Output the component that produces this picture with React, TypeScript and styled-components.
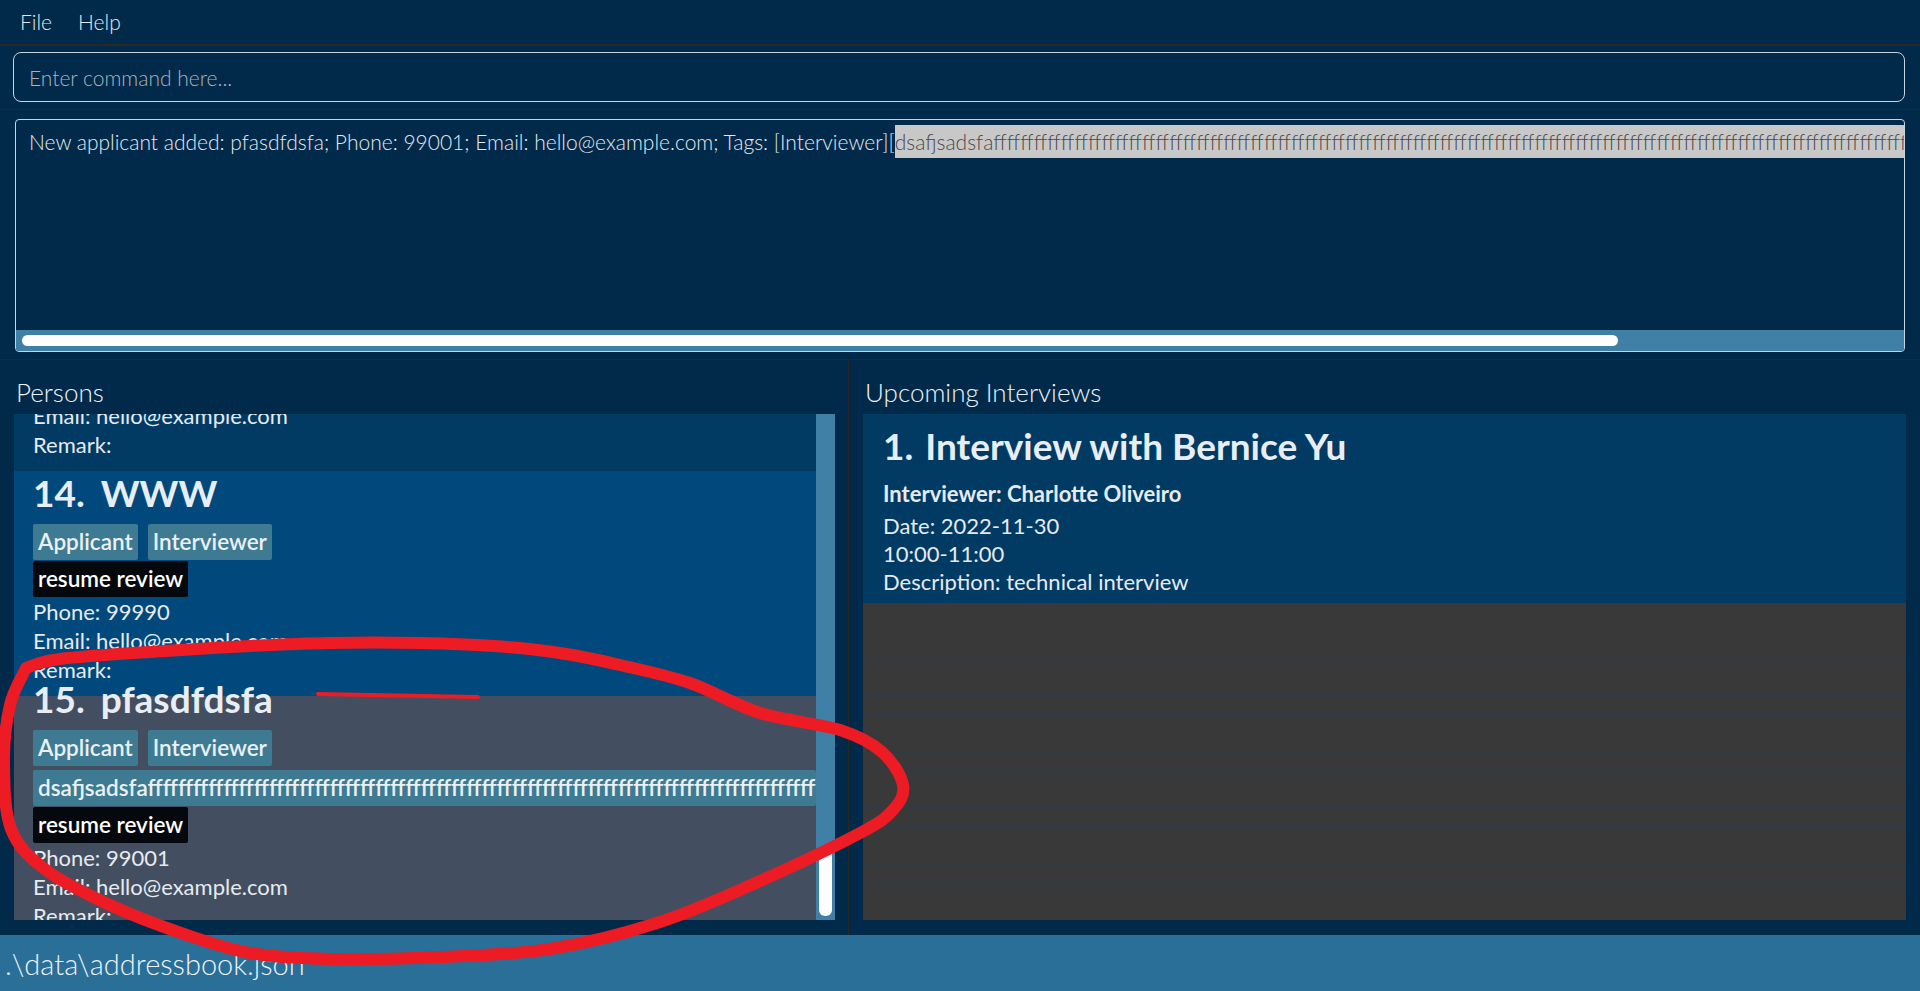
import React from 'react';
import styled, { createGlobalStyle } from 'styled-components';

const GlobalStyle = createGlobalStyle`
  html, body {
    margin: 0;
    padding: 0;
  }
  body {
    background: #012a4a;
    font-family: Lato, "Noto Sans", sans-serif;
    overflow: hidden;
  }
`;

const Window = styled.div`
  position: relative;
  width: 1920px;
  height: 991px;
  display: flex;
  flex-direction: column;
  background: #012a4a;
  color: #e6ebf0;
  overflow: hidden;
`;

const MenuBar = styled.div`
  height: 44px;
  display: flex;
  align-items: center;
  gap: 26px;
  padding-left: 20px;
  font-size: 21px;
  font-weight: 300;
  color: #e4e8ec;
  border-bottom: 2px solid #2a2826;
`;

const MenuItem = styled.span`
  line-height: 24px;
`;

const CommandPane = styled.div`
  padding: 6px 15px 7px 13px;
  border-bottom: 1px solid #2a2826;
`;

const CommandBox = styled.div`
  height: 48px;
  display: flex;
  align-items: center;
  padding-left: 15px;
  border: 1px solid #c9d3dc;
  border-radius: 8px;
  font-size: 21px;
  font-weight: 300;
  color: #a8b3bd;
`;

const ResultPane = styled.div`
  padding: 9px 15px 7px 15px;
  border-bottom: 1px solid #2a2826;
`;

const ResultBox = styled.div`
  height: 231px;
  display: flex;
  flex-direction: column;
  border: 1px solid #c9d3dc;
  border-radius: 4px;
  overflow: hidden;
`;

const ResultText = styled.div`
  flex: 1;
  padding: 5px 0 0 13px;
  font-size: 21px;
  font-weight: 300;
  line-height: 33px;
  white-space: nowrap;
  overflow: hidden;
  color: #e3e9ef;
`;

const Highlight = styled.span`
  display: inline-block;
  background: #c8c8c8;
  color: #4a4a4a;
`;

const HTrack = styled.div`
  height: 21px;
  padding: 5px 6px;
  box-sizing: border-box;
  background: #4080a6;
`;

const HThumb = styled.div`
  width: 1596px;
  height: 11px;
  border-radius: 6px;
  background: #ffffff;
`;

const Main = styled.div`
  flex: 1;
  display: flex;
`;

const Panel = styled.div<{ $width?: number }>`
  ${(p) => (p.$width ? `width: ${p.$width}px;` : 'flex: 1;')}
  display: flex;
  flex-direction: column;
  padding: 0 ${(p) => (p.$width ? 13 : 14)}px 15px 14px;
  border-right: ${(p) => (p.$width ? '1px solid #2a2826' : '0')};
  box-sizing: border-box;
`;

const PanelTitle = styled.div`
  height: 54px;
  padding: 17px 0 0 2px;
  box-sizing: border-box;
  font-size: 26px;
  font-weight: 300;
  line-height: 31px;
  color: #eef3f7;
`;

const ListFrame = styled.div`
  height: 506px;
  display: flex;
`;

const CardsViewport = styled.div`
  flex: 1;
  min-width: 0;
  overflow: hidden;
  background: #393939;
`;

const VTrack = styled.div`
  width: 19px;
  display: flex;
  flex-direction: column;
  justify-content: flex-end;
  padding: 0 3px 4px;
  box-sizing: border-box;
  background: #4080a6;
`;

const VThumb = styled.div`
  height: 68px;
  border-radius: 6px;
  background: #ffffff;
`;

const Card = styled.div<{ $bg: string }>`
  display: flow-root;
  background: ${(p) => p.$bg};
  padding: 0 0 12px 19px;
`;

const NameRow = styled.div<{ $shift?: number }>`
  display: flex;
  gap: 16px;
  margin-top: ${(p) => p.$shift ?? 0}px;
  font-size: 37px;
  font-weight: 700;
  line-height: 44px;
  color: #e8eef5;
  white-space: nowrap;
`;

const TagRow = styled.div`
  display: flex;
  flex-wrap: wrap;
  gap: 4px 10px;
  margin-top: 9px;
`;

const Tag = styled.span<{ $dark?: boolean }>`
  display: inline-block;
  max-width: 100%;
  box-sizing: border-box;
  padding: 0 5px;
  border-radius: 2px;
  background: ${(p) => (p.$dark ? '#05090d' : '#3e7b92')};
  color: ${(p) => (p.$dark ? '#ffffff' : '#eaf0f4')};
  font-size: 22.5px;
  font-weight: 600;
  line-height: 36px;
  white-space: nowrap;
  overflow: hidden;
`;

const NoteRow = styled.div`
  margin-top: 1px;
  display: flex;
`;

const Detail = styled.div<{ $bold?: boolean; $shift?: number; $lh?: number }>`
  margin-top: ${(p) => p.$shift ?? 0}px;
  font-size: 22px;
  font-weight: ${(p) => (p.$bold ? 700 : 400)};
  line-height: ${(p) => p.$lh ?? 29}px;
  color: #e6ebf0;
  white-space: nowrap;
`;

const InterviewList = styled.div`
  height: 506px;
  display: flex;
  flex-direction: column;
  overflow: hidden;
`;

const InterviewCard = styled.div`
  background: #013a63;
  padding: 10px 0 7px 20px;
`;

const InterviewTitle = styled.div`
  display: flex;
  gap: 12px;
  font-size: 37px;
  font-weight: 700;
  line-height: 44px;
  color: #e8eef5;
  margin-bottom: 12px;
`;

const EmptyRows = styled.div`
  flex: 1;
  background: repeating-linear-gradient(
    to bottom,
    #393939 0,
    #393939 17.7px,
    #2f3a44 17.7px,
    #2f3a44 18.7px
  );
`;

const StatusBar = styled.div`
  height: 56px;
  display: flex;
  align-items: center;
  padding-left: 5px;
  background: #2a6f97;
  font-size: 29px;
  font-weight: 300;
  color: #eef2f6;
`;

const Ink = styled.svg`
  position: absolute;
  left: 0;
  top: 0;
  pointer-events: none;
`;

type Pt = [number, number];

const smooth = (pts: Pt[]) => {
  let d = `M ${pts[0][0]} ${pts[0][1]}`;
  for (let i = 0; i < pts.length - 1; i++) {
    const p0 = pts[i - 1] || pts[i];
    const p1 = pts[i];
    const p2 = pts[i + 1];
    const p3 = pts[i + 2] || p2;
    const c1: Pt = [p1[0] + (p2[0] - p0[0]) / 6, p1[1] + (p2[1] - p0[1]) / 6];
    const c2: Pt = [p2[0] - (p3[0] - p1[0]) / 6, p2[1] - (p3[1] - p1[1]) / 6];
    d += ` C ${c1[0]} ${c1[1]} ${c2[0]} ${c2[1]} ${p2[0]} ${p2[1]}`;
  }
  return d;
};

const loop: Pt[] = [
  [26, 668], [60, 659], [165, 651], [250, 646], [329, 643], [420, 643],
  [494, 646], [560, 653], [620, 665], [690, 683], [760, 713], [840, 730],
  [882, 752], [903, 785], [893, 810], [860, 833], [760, 881], [660, 922],
  [550, 949], [440, 957], [330, 959], [250, 953], [181, 933], [110, 905],
  [46, 870], [11, 829], [4, 760], [10, 705], [24, 672],
];

const longTail = 'f'.repeat(260);

const App: React.FC = () => (
  <Window>
    <GlobalStyle />
    <MenuBar>
      <MenuItem>File</MenuItem>
      <MenuItem>Help</MenuItem>
    </MenuBar>
    <CommandPane>
      <CommandBox>Enter command here...</CommandBox>
    </CommandPane>
    <ResultPane>
      <ResultBox>
        <ResultText>
          New applicant added: pfasdfdsfa; Phone: 99001; Email: hello@example.com; Tags: [Interviewer][
          <Highlight>dsafjsadsfa{longTail}</Highlight>
        </ResultText>
        <HTrack>
          <HThumb />
        </HTrack>
      </ResultBox>
    </ResultPane>
    <Main>
      <Panel $width={849}>
        <PanelTitle>Persons</PanelTitle>
        <ListFrame>
          <CardsViewport>
            <Card $bg="#013a63">
              <Detail $shift={-13}>Email: hello@example.com</Detail>
              <Detail>Remark:</Detail>
            </Card>
            <Card $bg="#01497c">
              <NameRow>
                <span>14.</span>
                <span>WWW</span>
              </NameRow>
              <TagRow>
                <Tag>Applicant</Tag>
                <Tag>Interviewer</Tag>
              </TagRow>
              <NoteRow>
                <Tag $dark>resume review</Tag>
              </NoteRow>
              <Detail>Phone: 99990</Detail>
              <Detail>Email: hello@example.com</Detail>
              <Detail>Remark:</Detail>
            </Card>
            <Card $bg="#434f60">
              <NameRow $shift={-19}>
                <span>15.</span>
                <span>pfasdfdsfa</span>
              </NameRow>
              <TagRow>
                <Tag>Applicant</Tag>
                <Tag>Interviewer</Tag>
                <Tag>dsafjsadsfa{longTail}</Tag>
              </TagRow>
              <NoteRow>
                <Tag $dark>resume review</Tag>
              </NoteRow>
              <Detail>Phone: 99001</Detail>
              <Detail>Email: hello@example.com</Detail>
              <Detail>Remark:</Detail>
            </Card>
          </CardsViewport>
          <VTrack>
            <VThumb />
          </VTrack>
        </ListFrame>
      </Panel>
      <Panel>
        <PanelTitle>Upcoming Interviews</PanelTitle>
        <InterviewList>
          <InterviewCard>
            <InterviewTitle>
              <span>1.</span>
              <span>Interview with Bernice Yu</span>
            </InterviewTitle>
            <Detail $bold $lh={28}>Interviewer: Charlotte Oliveiro</Detail>
            <Detail $shift={4} $lh={28}>Date: 2022-11-30</Detail>
            <Detail $lh={28}>10:00-11:00</Detail>
            <Detail $lh={28}>Description: technical interview</Detail>
          </InterviewCard>
          <EmptyRows />
        </InterviewList>
      </Panel>
    </Main>
    <StatusBar>.\data\addressbook.json</StatusBar>
    <Ink width={1920} height={991} viewBox="0 0 1920 991">
      <path
        d={smooth(loop)}
        fill="none"
        stroke="#ed1c24"
        strokeWidth={12}
        strokeLinecap="round"
        strokeLinejoin="round"
      />
      <path d="M 318 694 L 478 697" stroke="#ed1c24" strokeWidth={4} strokeLinecap="round" />
    </Ink>
  </Window>
);

export default App;
